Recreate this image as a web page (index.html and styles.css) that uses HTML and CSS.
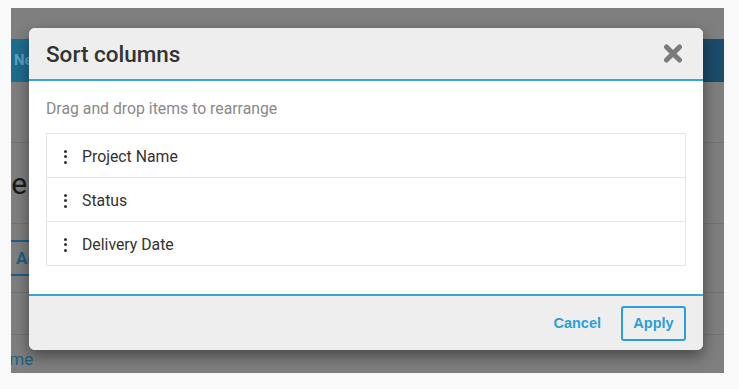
FILE: index.html
```html
<!DOCTYPE html>
<html lang="en">
<head>
    <meta charset="UTF-8">
    <meta name="viewport" content="width=device-width, initial-scale=1.0">
    <title>Sort columns</title>
    <link rel="stylesheet" href="styles.css">
</head>
<body>

    <div class="frame">
        <div class="page">
            <div class="topGap"></div>
            <div class="navBar">
                <div class="navTab">New</div>
                <div class="navRest"></div>
            </div>
            <div class="pageRow rowTall"></div>
            <div class="pageRow rowHeading">
                <span class="heading">Manage columns</span>
            </div>
            <div class="pageRow rowActions">
                <span class="addBtn">Add</span>
            </div>
            <div class="pageRow rowPlain"></div>
            <div class="pageFoot">
                <span class="footLink">Name</span>
            </div>
        </div>

        <div id="sortDialog" class="dialog">
            <div class="dialogHeader">
                <h1>Sort columns</h1>
                <button class="closeBtn" aria-label="Close">
                    <svg width="20" height="19" viewBox="0 0 20 19">
                        <path d="M3.5 3 L16.5 16 M16.5 3 L3.5 16" stroke="#7b7b7b" stroke-width="5" stroke-linecap="round"/>
                    </svg>
                </button>
            </div>
            <div class="dialogBody">
                <p class="hint">Drag and drop items to rearrange</p>
                <ul class="sortList">
                    <li class="sortItem"><span class="handle"><i></i><i></i><i></i></span>Project Name</li>
                    <li class="sortItem"><span class="handle"><i></i><i></i><i></i></span>Status</li>
                    <li class="sortItem"><span class="handle"><i></i><i></i><i></i></span>Delivery Date</li>
                </ul>
            </div>
            <div class="dialogFooter">
                <button class="linkBtn">Cancel</button>
                <button class="outlineBtn">Apply</button>
            </div>
        </div>
    </div>

</body>
</html>
```

FILE: styles.css
```css
body {
    margin: 0;
    padding: 8px 0 0 11px;
    background-color: #f9f9f9;
    font-family: 'Roboto', sans-serif;
}
.frame {
    position: relative;
    width: 713px;
    height: 365px;
    overflow: hidden;
    background: #7f7f7f;
}

/* dimmed page behind the dialog */
.topGap {
    height: 31px;
}
.navBar {
    display: flex;
    height: 43px;
}
.navTab {
    width: 180px;
    background: #1f6d8e;
    color: #5aa3c4;
    font-size: 15px;
    font-weight: 700;
    line-height: 43px;
    padding-left: 3px;
}
.navRest {
    flex: 1;
    background: #1a4c6b;
}
.pageRow {
    border-bottom: 1px solid #747474;
}
.rowTall {
    height: 60px;
}
.rowHeading {
    height: 80px;
    display: flex;
    align-items: center;
}
.heading {
    margin-left: -92px;
    font-size: 30px;
    color: #1a1a1a;
}
.rowActions {
    height: 68px;
    display: flex;
    align-items: center;
}
.addBtn {
    margin-left: -12px;
    padding: 6px 18px 6px 15px;
    border: 2px solid #1d5f86;
    border-radius: 3px;
    color: #1d5f86;
    font-size: 17px;
    font-weight: 700;
    line-height: 20px;
}
.rowPlain {
    height: 41px;
}
.pageFoot {
    padding-top: 14px;
}
.footLink {
    margin-left: -23px;
    color: #1d5f86;
    font-size: 17px;
}

/* dialog */
.dialog {
    position: absolute;
    top: 20px;
    left: 18px;
    width: 674px;
    height: 322px;
    display: flex;
    flex-direction: column;
    background: #fff;
    border-radius: 6px;
    overflow: hidden;
    box-shadow: 0 6px 16px rgba(0, 0, 0, 0.45);
}
.dialogHeader {
    height: 51px;
    display: flex;
    align-items: center;
    justify-content: space-between;
    padding: 0 20px 0 17px;
    background: #eeeeee;
    border-bottom: 2px solid #36a6e0;
}
.dialogHeader h1 {
    margin: 0;
    font-size: 22.5px;
    font-weight: 500;
    color: #333;
}
.closeBtn {
    display: flex;
    padding: 0;
    border: none;
    background: none;
    cursor: pointer;
}
.dialogBody {
    flex: 1;
    padding: 18px 17px 0;
    border-bottom: 2px solid #36a6e0;
}
.hint {
    margin: 0 0 14px;
    font-size: 15.8px;
    line-height: 20px;
    color: #8a8a8a;
}
.sortList {
    margin: 0;
    padding: 0;
    list-style: none;
    border: 1px solid #e6e6e6;
}
.sortItem {
    display: flex;
    align-items: center;
    height: 41px;
    padding: 2px 0 0 17px;
    font-size: 15.8px;
    color: #333;
}
.sortItem + .sortItem {
    border-top: 1px solid #e6e6e6;
}
.handle {
    display: flex;
    flex-direction: column;
    gap: 2.5px;
    margin-right: 15px;
}
.handle i {
    width: 3px;
    height: 3px;
    border-radius: 50%;
    background: #333;
}
.dialogFooter {
    height: 54px;
    display: flex;
    align-items: center;
    justify-content: flex-end;
    gap: 20px;
    padding-right: 17px;
    background: #eeeeee;
}
.linkBtn,
.outlineBtn {
    font-family: 'Liberation Sans', Arial, sans-serif;
    font-size: 14.5px;
    font-weight: 700;
    color: #2a9edb;
    background: none;
    cursor: pointer;
}
.linkBtn {
    border: none;
    padding: 0;
}
.outlineBtn {
    width: 65px;
    height: 35px;
    padding: 0;
    border: 2px solid #2a9edb;
    border-radius: 3px;
}
```
